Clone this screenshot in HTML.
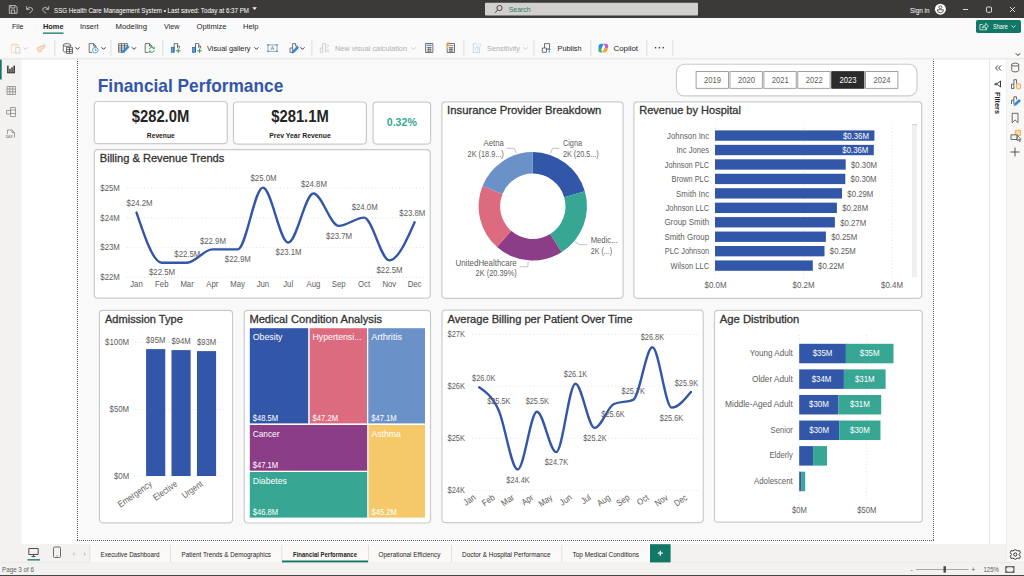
<!DOCTYPE html>
<html><head><meta charset="utf-8"><title>SSG Health Care Management System</title>
<style>
html,body{margin:0;padding:0;background:#ffffff;}
body{width:1024px;height:576px;overflow:hidden;font-family:"Liberation Sans",sans-serif;}
svg{display:block;position:absolute;left:0;top:0;}
text{font-family:"Liberation Sans",sans-serif;}
</style></head><body>
<svg width="1024" height="576" viewBox="0 0 1024 576">
<rect x="0.00" y="0.00" width="1024.00" height="576.00" fill="#ffffff"/>
<rect x="0.00" y="0.00" width="1024.00" height="18.00" fill="#3b3a39"/>
<rect x="485.00" y="2.70" width="213.00" height="12.80" fill="#d2d0ce" rx="1"/>
<text x="508.7" y="12" font-size="7.4" fill="#2c7a6b" textLength="22" lengthAdjust="spacingAndGlyphs">Search</text>
<g stroke="#3b3a39" stroke-width="0.9" fill="none"><circle cx="499.5" cy="8" r="2.6"/><path d="M497.6,10 L495,12.8"/></g>
<text x="54" y="13" font-size="6.9" fill="#ffffff" textLength="195" lengthAdjust="spacingAndGlyphs">SSG Health Care Management System • Last saved: Today at 6:37 PM</text>
<path d="M252.3,7.300 l4.600,0 l-2.300,2.800 z" fill="#ffffff"/>
<g stroke="#d6d6d6" stroke-width="0.8" fill="none" stroke-linejoin="round"><path d="M9.3,5.600 h6.300 l1.500,1.500 v6.200 h-7.800 z M10.900,5.600 v2.400 h4 v-2.400 M11.300,13.300 v-3.300 h3.400 v3.300"/><path d="M26.600,6.200 v3.100 h3.100 M26.900,9 Q29.600,6.200 31.900,8 Q34,10.300 29.200,13.300"/><path d="M48.700,6.200 v3.100 h-3.100 M48.400,9 Q45.700,6.200 43.400,8 Q41.300,10.300 46.100,13.300"/></g>
<text x="910" y="12.7" font-size="6.9" fill="#ffffff" textLength="19.5" lengthAdjust="spacingAndGlyphs">Sign in</text>
<circle cx="940.4" cy="9.2" r="5.500" fill="#ffffff"/><circle cx="940.400" cy="7.200" r="1.500" fill="none" stroke="#3b3a39" stroke-width="0.800"/><path d="M937.300,9.800 h6.200 a3.100,3 0 0 1 -6.200,0 z" fill="none" stroke="#3b3a39" stroke-width="0.800"/>
<g stroke="#ffffff" stroke-width="0.8" fill="none"><path d="M963,9.5 h5"/><rect x="986.4" y="7" width="5.100" height="5.300" rx="0.900"/><path d="M1010,7 l5,5 M1015,7 l-5,5"/></g>
<rect x="0.00" y="18.00" width="1024.00" height="17.00" fill="#fafafa"/>
<text x="12" y="29.3" font-size="7.2" fill="#252423" textLength="11.5" lengthAdjust="spacingAndGlyphs">File</text>
<text x="43" y="29.3" font-size="7.2" fill="#252423" font-weight="bold" textLength="20.5" lengthAdjust="spacingAndGlyphs">Home</text>
<text x="80" y="29.3" font-size="7.2" fill="#252423" textLength="18.5" lengthAdjust="spacingAndGlyphs">Insert</text>
<text x="115.5" y="29.3" font-size="7.2" fill="#252423" textLength="31.5" lengthAdjust="spacingAndGlyphs">Modeling</text>
<text x="164" y="29.3" font-size="7.2" fill="#252423" textLength="15.5" lengthAdjust="spacingAndGlyphs">View</text>
<text x="196.5" y="29.3" font-size="7.2" fill="#252423" textLength="30.0" lengthAdjust="spacingAndGlyphs">Optimize</text>
<text x="243" y="29.3" font-size="7.2" fill="#252423" textLength="15.5" lengthAdjust="spacingAndGlyphs">Help</text>
<rect x="43.00" y="32.50" width="20.50" height="1.30" fill="#117865"/>
<rect x="976.00" y="20.10" width="45.00" height="12.90" fill="#117865" rx="1.8"/>
<text x="993" y="29.3" font-size="7" fill="#ffffff" textLength="15" lengthAdjust="spacingAndGlyphs">Share</text>
<g stroke="#ffffff" stroke-width="0.8" fill="none"><path d="M1011.5,25.5 l2,2 l2,-2"/><path d="M982.6,24.500 h-2.700 v5.300 h6.700 v-1.800 M982.200,28.100 q0.300,-2.900 3.500,-3 v-1.800 l2.800,2.700 l-2.800,2.700 v-1.800 q-2.100,-0.100 -3.500,1.200 z" stroke-width="0.700"/></g>
<rect x="0.00" y="35.00" width="1024.00" height="23.00" fill="#fafafa"/>
<path d="M1015.8,53.3 l2.2,2.2 l2.2,-2.2" stroke="#252423" stroke-width="1" fill="none"/>
<rect x="54.50" y="40.00" width="0.80" height="16.00" fill="#d8d6d4"/>
<rect x="110.50" y="40.00" width="0.80" height="16.00" fill="#d8d6d4"/>
<rect x="162.50" y="40.00" width="0.80" height="16.00" fill="#d8d6d4"/>
<rect x="311.50" y="40.00" width="0.80" height="16.00" fill="#d8d6d4"/>
<rect x="463.50" y="40.00" width="0.80" height="16.00" fill="#d8d6d4"/>
<rect x="533.50" y="40.00" width="0.80" height="16.00" fill="#d8d6d4"/>
<rect x="590.50" y="40.00" width="0.80" height="16.00" fill="#d8d6d4"/>
<rect x="646.50" y="40.00" width="0.80" height="16.00" fill="#d8d6d4"/>
<rect x="672.50" y="40.00" width="0.80" height="16.00" fill="#d8d6d4"/>
<text x="207" y="50.5" font-size="7.5" fill="#252423" textLength="43.5" lengthAdjust="spacingAndGlyphs">Visual gallery</text>
<text x="335" y="50.5" font-size="7.5" fill="#b3b0ad" textLength="72" lengthAdjust="spacingAndGlyphs">New visual calculation</text>
<text x="487" y="50.5" font-size="7.5" fill="#b3b0ad" textLength="33" lengthAdjust="spacingAndGlyphs">Sensitivity</text>
<text x="557.5" y="50.5" font-size="7.5" fill="#252423" textLength="24" lengthAdjust="spacingAndGlyphs">Publish</text>
<text x="613.5" y="50.5" font-size="7.5" fill="#252423" textLength="24.5" lengthAdjust="spacingAndGlyphs">Copilot</text>
<g fill="#252423"><circle cx="655.6" cy="47.8" r="0.8"/><circle cx="659.4" cy="47.8" r="0.8"/><circle cx="663.2" cy="47.8" r="0.8"/></g>
<path d="M23.5,47.3 l2,2 l2,-2" stroke="#c8c6c4" stroke-width="0.9" fill="none"/>
<path d="M75.5,47.3 l2,2 l2,-2" stroke="#252423" stroke-width="0.9" fill="none"/>
<path d="M101.5,47.3 l2,2 l2,-2" stroke="#252423" stroke-width="0.9" fill="none"/>
<path d="M132,47.3 l2,2 l2,-2" stroke="#252423" stroke-width="0.9" fill="none"/>
<path d="M254.5,47.3 l2,2 l2,-2" stroke="#252423" stroke-width="0.9" fill="none"/>
<path d="M300.5,47.3 l2,2 l2,-2" stroke="#252423" stroke-width="0.9" fill="none"/>
<path d="M411.5,47.3 l2,2 l2,-2" stroke="#c8c6c4" stroke-width="0.9" fill="none"/>
<path d="M523.5,47.3 l2,2 l2,-2" stroke="#c8c6c4" stroke-width="0.9" fill="none"/>
<g fill="none" stroke-width="0.75" stroke-linejoin="round"><path d="M13,44.6 h-1.7 v8.2 h4 M16.5,44.6 h1.8 v2.2 M13,43.8 h3.5 v1.6 h-3.5 z" stroke="#f3cfa9"/><path d="M15.7,47.4 h4.2 v5.8 h-4.2 z" stroke="#c8c6c4" fill="#faf9f8"/><path d="M36.8,48.2 l6.2,-2.8 l1.2,2.6 l-3.2,1.500 l0.300,1.800 l-2.200,0.800 z" stroke="#f0b67f" fill="#fbe3c8"/><path d="M43,45.400 l1.600,-1.300 l1,2.100 l-1.400,0.800" stroke="#c8c6c4"/><path d="M63.300,45 a3.700,1.400 0 0 1 7.400,0 a3.700,1.400 0 0 1 -7.400,0 v6 a3.700,1.400 0 0 0 3.200,1.300 M70.700,45 v2" stroke="#484644"/><path d="M66.500,47.400 h6 v6 h-6 z M66.500,49.400 h6 M66.500,51.400 h6 M69.500,47.400 v6" stroke="#484644" fill="#faf9f8"/><path d="M92,52.400 h-2.800 v-8.800 h4.300 l2.500,2.500 v1.500 M93.500,43.600 v2.500 h2.500" stroke="#484644"/><circle cx="95.300" cy="50.200" r="2.800" stroke="#2b88d8" fill="#faf9f8"/><path d="M95.300,48.600 v1.800 h1.400" stroke="#2b88d8"/><path d="M118.600,43.700 h8.800 v4 M118.600,43.700 v8.500 h4 M118.600,45.800 h8.800 M118.600,48 h6 M118.600,50.100 h4.500 M121.500,43.700 v8.500 M124.500,43.700 v5.500" stroke="#484644"/><path d="M122,53 l0.600,-2.200 l5.200,-5.400 l1.600,1.600 l-5.200,5.400 z" fill="#2b88d8" stroke="#2b88d8" stroke-width="0.400"/><path d="M148.500,52.400 h-3.300 v-8.800 h4.300 l2.500,2.500 v1 M149.500,43.600 v2.500 h2.500" stroke="#484644"/><path d="M149.300,49.300 a2.700,2.700 0 0 1 4.800,-0.900 M154.400,50.300 a2.700,2.700 0 0 1 -4.800,0.900" stroke="#2a9d4b" stroke-width="0.9"/><path d="M154.400,46.900 v1.700 h-1.700 M149.300,52.700 v-1.700 h1.700" stroke="#2a9d4b" stroke-width="0.8"/></g>
<g fill="none" stroke-width="0.75"><rect x="171.3" y="47.3" width="2.6" height="5" fill="#5aa3e6" stroke="#1f6fbf"/><path d="M174.20000000000002,52.300 v-8.700 h3.300 v4.500 M177.5,46 h1.800 v2.500" stroke="#484644"/><path d="M176.10000000000002,50.800 h4.400 M178.3,48.600 v4.400" stroke="#2a9d4b" stroke-width="1"/></g>
<g fill="none" stroke-width="0.75"><rect x="192.6" y="47.3" width="2.6" height="5" fill="#5aa3e6" stroke="#1f6fbf"/><path d="M195.5,52.300 v-8.700 h3.300 v4.500 M198.79999999999998,46 h1.800 v2.500" stroke="#484644"/><path d="M197.4,50.800 h4.400 M199.6,48.600 v4.400" stroke="#2a9d4b" stroke-width="1"/></g>
<g fill="none" stroke-width="0.75" stroke-linejoin="round"><rect x="268" y="44.900" width="9" height="6.500" stroke="#8a8886"/><path d="M270.900,50 l1.600,-3.800 l1.600,3.800 M271.500,48.700 h2" stroke="#2b88d8" stroke-width="0.6"/><g fill="#2b88d8" stroke="none"><rect x="267.300" y="44.200" width="1.400" height="1.400"/><rect x="276.300" y="44.200" width="1.400" height="1.400"/><rect x="267.300" y="50.700" width="1.400" height="1.400"/><rect x="276.300" y="50.700" width="1.400" height="1.400"/></g><path d="M290,52.300 v-4.300 h2.600 v4.300 z M292.600,48 v-4.400 h3 v2.500 M295.600,46 h2 v1" stroke="#484644"/><path d="M292,53.300 l0.600,-2.300 l4.600,-4.900 l1.600,1.600 l-4.600,4.900 z" fill="#2b88d8" stroke="#2b88d8" stroke-width="0.400"/><path d="M320.300,52.300 v-4.300 h2.400 v4.300 z M322.700,48 v-4.400 h2.800 v8.700" stroke="#c8c6c4"/><path d="M326,45.200 h2.800 l-1.800,3.300 M326.300,49.300 l2.600,3.200 M328.900,49.300 l-2.600,3.200" stroke="#c8c6c4" stroke-width="0.6"/><rect x="425.600" y="43.500" width="7.300" height="9" stroke="#484644"/><path d="M426.800,45.300 h4.900" stroke="#2b88d8" stroke-width="1.100"/><path d="M426.800,47.500 h4.900 M426.800,49.300 h4.900 M426.800,51.100 h4.900 M428.400,46.800 v5 M430.100,46.800 v5" stroke="#484644" stroke-width="0.6"/><rect x="447.200" y="43.500" width="7.300" height="9" stroke="#484644"/><path d="M448.800,45.600 h4.500 M448.600,47.700 h4.700 M448.600,49.400 h4.700 M448.600,51.100 h4.700 M450.100,47 v4.800 M451.800,47 v4.800" stroke="#484644" stroke-width="0.6"/><path d="M447.200,42.200 h2.300 l-1,2.400 h1.300 l-3.200,4.300 l0.900,-2.900 h-1.300 z" fill="#e8912d" stroke="#faf9f8" stroke-width="0.3"/><path d="M476.500,43.700 h-3.200 v8.700 h6.200 v-4" stroke="#a9d1f2"/><path d="M477.300,45.500 l2,-2 l2,2 l-2.800,2.800 z M475,48.300 l2,-1.300 l1.600,2.200 l-2,1.300 z" stroke="#a9d1f2" stroke-width="0.6"/><path d="M542.300,48 h4.200 v4.300 h-4.200 z M544.500,48 v-4.400 h5 v5.500 h-3" stroke="#484644"/><path d="M549.200,53 v-4.500 M547.600,50 l1.600,-1.600 l1.600,1.600" stroke="#2b88d8" stroke-width="0.8"/></g>
<g><path d="M598.500,47 q0,-3.200 3.200,-3.200 h2 l-1.700,4.800 h-3.500 z" fill="#2f8fe8"/><path d="M603.700,43.800 h1.800 q3,0 2.700,3.200 l-0.200,1.200 h-3.500 l0.500,-1.700 z" fill="#c25fd0"/><path d="M608,48.200 l-0.300,1.300 q-0.700,3 -3.500,3 h-2 l1.700,-4.800 z" fill="#f5a73b"/><path d="M602.200,52.500 h-1.200 q-3,0 -2.600,-3 l0.200,-1.500 h3.600 l-0.800,2.300 z" fill="#3bb273"/><path d="M602.600,46.300 h2.300 l-1.300,3.800 h-2.300 z" fill="#ffffff"/></g>
<rect x="0.00" y="59.00" width="21.50" height="485.00" fill="#f3f2f1"/>
<rect x="0.00" y="59.00" width="1.70" height="20.50" fill="#117865"/>
<g fill="#3b3a39"><rect x="7.1" y="65.600" width="1.500" height="7.600"/><rect x="9.200" y="68.800" width="1.500" height="4.400"/><rect x="11.300" y="67.300" width="1.500" height="5.900"/><rect x="13.400" y="65.600" width="1.600" height="7.600"/><rect x="7.100" y="72.300" width="7.900" height="0.900"/></g>
<g fill="none" stroke="#8a8886" stroke-width="0.800"><path d="M7,86.500 h8.500 v8 h-8.500 z M7,89 h8.500 M7,91.800 h8.500 M9.800,86.500 v8 M12.700,86.500 v8"/><path d="M10.500,107.500 h5 v9 h-5 z M10.500,110 h5 M10.500,113.500 h5 M6.500,110.500 h4 v3.500 h-4 z"/><path d="M7.500,134 v-4 h4.500 l2.500,2.500 v5 M12,130 v2.500 h2.500"/></g>
<text x="5.8" y="137.8" font-size="3.2" fill="#8a8886" font-weight="bold">DAX</text>
<rect x="989.00" y="59.00" width="0.80" height="485.00" fill="#e1dfdd"/>
<rect x="1006.50" y="59.00" width="17.50" height="485.00" fill="#f8f7f6"/>
<rect x="1006.20" y="59.00" width="0.60" height="485.00" fill="#eceae8"/>
<g fill="none" stroke="#252423" stroke-width="0.900"><path d="M998,65.500 l-2.500,2.500 l2.500,2.500 M1001,65.500 l-2.500,2.500 l2.500,2.500"/><path d="M995,81.500 h6 l-2.300,2.800 v3 l-1.400,-1 v-2 z" transform="rotate(90 998 84)"/></g>
<text x="0" y="0" font-size="7.400" font-weight="bold" fill="#252423" transform="translate(995.300,92) rotate(90)" textLength="22" lengthAdjust="spacingAndGlyphs">Filters</text>
<g fill="none" stroke="#484644" stroke-width="0.8" stroke-linejoin="round"><path d="M1011.7,64.6 a3.5,1.5 0 0 1 7,0 v5.800 a3.500,1.500 0 0 1 -7,0 z M1011.700,64.600 a3.500,1.500 0 0 0 7,0"/><path d="M1011.500,88.500 v-4.300 h2.400 v4.300 z M1013.900,84.200 v-4.500 h2.600 v4"/><rect x="1016.600" y="83.800" width="4" height="5" rx="1.100" stroke="#e8912d" fill="#fde7cc"/><path d="M1011.500,104 v-3.800 h2.400 v3.800 M1013.900,100.200 v-3.400 h2.600 v2.800"/><path d="M1013.800,105.800 l0.800,-2.400 l4.400,-4.200 l1.700,1.700 l-4.400,4.200 z" fill="#2b88d8" stroke="#2b88d8" stroke-width="0.400"/><path d="M1012.200,113.300 h5.800 v9.400 l-2.900,-2.700 l-2.900,2.700 z"/><rect x="1015.300" y="130.300" width="5.200" height="5.200" fill="#fbd9a8" stroke="#f0a23c"/><path d="M1011,134.800 h6 v4.700 h-6 z" fill="#f3f2f1"/><path d="M1017.300,135.500 v5.300 l1.300,-1.200 l1,2 l0.800,-0.400 l-1,-1.900 h1.700 z" fill="#ffffff" stroke="#252423" stroke-width="0.600"/><path d="M1010.500,152 h9 M1015,147.500 v9" stroke-width="0.9"/></g>
<rect x="0.00" y="544.00" width="1024.00" height="32.00" fill="#f3f2f1"/>
<rect x="0.00" y="575.00" width="1024.00" height="1.00" fill="#484644"/>
<rect x="1006.50" y="544.00" width="17.50" height="18.50" fill="#f8f7f6"/>
<rect x="1006.20" y="544.00" width="0.60" height="18.50" fill="#eceae8"/>
<rect x="0.00" y="562.40" width="1024.00" height="0.70" fill="#e9e7e5"/>
<rect x="89.80" y="544.20" width="560.20" height="18.30" fill="#faf9f8"/>
<text x="100.5" y="556.6" font-size="7.4" fill="#252423" textLength="59.0" lengthAdjust="spacingAndGlyphs">Executive Dashboard</text>
<text x="181.5" y="556.6" font-size="7.4" fill="#252423" textLength="89.5" lengthAdjust="spacingAndGlyphs">Patient Trends &amp; Demographics</text>
<text x="293" y="556.6" font-size="7.4" fill="#252423" font-weight="bold" textLength="64" lengthAdjust="spacingAndGlyphs">Financial Performance</text>
<text x="378.5" y="556.6" font-size="7.4" fill="#252423" textLength="62.0" lengthAdjust="spacingAndGlyphs">Operational Efficiency</text>
<text x="462" y="556.6" font-size="7.4" fill="#252423" textLength="88.5" lengthAdjust="spacingAndGlyphs">Doctor &amp; Hospital Performance</text>
<text x="572.5" y="556.6" font-size="7.4" fill="#252423" textLength="66.5" lengthAdjust="spacingAndGlyphs">Top Medical Conditions</text>
<rect x="89.50" y="545.00" width="0.70" height="17.00" fill="#d8d6d4"/>
<rect x="170.30" y="545.00" width="0.70" height="17.00" fill="#d8d6d4"/>
<rect x="281.50" y="545.00" width="0.70" height="17.00" fill="#d8d6d4"/>
<rect x="368.00" y="545.00" width="0.70" height="17.00" fill="#d8d6d4"/>
<rect x="451.00" y="545.00" width="0.70" height="17.00" fill="#d8d6d4"/>
<rect x="561.50" y="545.00" width="0.70" height="17.00" fill="#d8d6d4"/>
<rect x="282.00" y="560.50" width="86.00" height="1.90" fill="#117865"/>
<rect x="650.00" y="544.20" width="20.60" height="18.20" fill="#117865"/>
<path d="M657.8,553.2 h5 M660.3,550.7 v5" stroke="#ffffff" stroke-width="1.300"/>
<g fill="none" stroke="#3b3a39" stroke-width="0.900"><path d="M28.800,548.500 h9.400 v6 h-9.400 z M31.500,556.500 h4 M33.500,554.500 v2"/></g>
<rect x="27.50" y="559.20" width="12.50" height="1.30" fill="#117865"/>
<g fill="none" stroke="#605e5c" stroke-width="0.900"><rect x="53.500" y="547" width="7" height="10.500" rx="1.200"/><path d="M56.500,555.800 h1"/></g>
<path d="M74.500,552 l-2,2 l2,2 z M84,552 l2,2 l-2,2 z" fill="#c8c6c4"/>
<text x="2" y="572" font-size="7" fill="#605e5c" textLength="32" lengthAdjust="spacingAndGlyphs">Page 3 of 6</text>
<text x="910.5" y="572" font-size="7" fill="#605e5c">-</text>
<rect x="916.00" y="569.20" width="52.50" height="0.70" fill="#8a8886"/>
<rect x="943.50" y="566.20" width="2.40" height="6.40" fill="#484644"/>
<text x="971.3" y="572.3" font-size="7" fill="#605e5c">+</text>
<text x="983.5" y="572" font-size="7" fill="#605e5c" textLength="15.5" lengthAdjust="spacingAndGlyphs">125%</text>
<rect x="1005.2" y="566.1" width="9.300" height="6.800" fill="#605e5c"/><rect x="1006.300" y="567.200" width="7.100" height="4.600" rx="1.800" fill="#f3f2f1"/>
<g fill="none" stroke="#252423" stroke-width="0.900"><circle cx="1015.300" cy="554.500" r="1.600"/><path d="M1015.300,549.700 l2.400,1.200 l1.800,-0.300 l0.900,2 l-1.300,1.900 l1.300,1.900 l-0.900,2 l-1.800,-0.300 l-2.400,1.200 l-2.400,-1.200 l-1.800,0.300 l-0.900,-2 l1.300,-1.900 l-1.300,-1.900 l0.900,-2 l1.800,0.300 z" stroke-linejoin="round"/></g>
<rect x="78.30" y="59.00" width="854.70" height="481.00" fill="#f9f9f9"/>
<g stroke="#5f5f5f" stroke-width="1" stroke-dasharray="1,1" fill="none"><path d="M77.5,59 V541"/><path d="M933.5,59 V541"/><path d="M77,540.5 H934"/></g>
<text x="97.8" y="92.3" font-size="17.8" fill="#3257A8" font-weight="bold" textLength="185.5" lengthAdjust="spacingAndGlyphs">Financial Performance</text>
<rect x="676.4" y="64.2" width="240.6" height="31.7" rx="8" fill="#ffffff" stroke="#cbcbcb" stroke-width="1.1"/>
<rect x="696.10" y="71.6" width="32.3" height="16.7" fill="#ffffff" stroke="#8a8a8a" stroke-width="0.8"/>
<text x="712.5" y="82.8" font-size="9" fill="#605e5c" text-anchor="middle" textLength="17" lengthAdjust="spacingAndGlyphs">2019</text>
<rect x="730.00" y="71.6" width="32.3" height="16.7" fill="#ffffff" stroke="#8a8a8a" stroke-width="0.8"/>
<text x="746.4" y="82.8" font-size="9" fill="#605e5c" text-anchor="middle" textLength="17" lengthAdjust="spacingAndGlyphs">2020</text>
<rect x="763.90" y="71.6" width="32.3" height="16.7" fill="#ffffff" stroke="#8a8a8a" stroke-width="0.8"/>
<text x="780.3" y="82.8" font-size="9" fill="#605e5c" text-anchor="middle" textLength="17" lengthAdjust="spacingAndGlyphs">2021</text>
<rect x="797.80" y="71.6" width="32.3" height="16.7" fill="#ffffff" stroke="#8a8a8a" stroke-width="0.8"/>
<text x="814.2" y="82.8" font-size="9" fill="#605e5c" text-anchor="middle" textLength="17" lengthAdjust="spacingAndGlyphs">2022</text>
<rect x="831.70" y="71.6" width="32.3" height="16.7" fill="#2b2b2b" stroke="#2b2b2b" stroke-width="0.8"/>
<text x="848.1" y="82.8" font-size="9" fill="#ffffff" text-anchor="middle" textLength="17" lengthAdjust="spacingAndGlyphs">2023</text>
<rect x="865.60" y="71.6" width="32.3" height="16.7" fill="#ffffff" stroke="#8a8a8a" stroke-width="0.8"/>
<text x="882.0" y="82.8" font-size="9" fill="#605e5c" text-anchor="middle" textLength="17" lengthAdjust="spacingAndGlyphs">2024</text>
<rect x="94.3" y="101.5" width="133.0" height="42.19999999999999" rx="3.5" fill="#ffffff" stroke="#cbcbcb" stroke-width="1.2"/>
<rect x="233.5" y="102" width="132.89999999999998" height="42.099999999999994" rx="3.5" fill="#ffffff" stroke="#cbcbcb" stroke-width="1.2"/>
<rect x="373.1" y="102.2" width="57.5" height="41.89999999999999" rx="3.5" fill="#ffffff" stroke="#cbcbcb" stroke-width="1.2"/>
<text x="160.5" y="121.7" font-size="16.3" fill="#252423" text-anchor="middle" font-weight="bold" textLength="57.5" lengthAdjust="spacingAndGlyphs">$282.0M</text>
<text x="160.8" y="137.8" font-size="7.6" fill="#252423" text-anchor="middle" font-weight="bold" textLength="28" lengthAdjust="spacingAndGlyphs">Revenue</text>
<text x="300" y="122.1" font-size="16.3" fill="#252423" text-anchor="middle" font-weight="bold" textLength="57.5" lengthAdjust="spacingAndGlyphs">$281.1M</text>
<text x="300" y="138" font-size="7.6" fill="#252423" text-anchor="middle" font-weight="bold" textLength="61.5" lengthAdjust="spacingAndGlyphs">Prev Year Revenue</text>
<text x="401.8" y="126" font-size="10.7" fill="#37A794" text-anchor="middle" font-weight="bold" textLength="30" lengthAdjust="spacingAndGlyphs">0.32%</text>
<rect x="94.3" y="149.6" width="335.9" height="148.6" rx="3.5" fill="#ffffff" stroke="#cbcbcb" stroke-width="1.2"/>
<text x="99.8" y="162.3" font-size="10.1" fill="#333333" stroke="#333333" stroke-width="0.28" textLength="124.5" lengthAdjust="spacingAndGlyphs">Billing &amp; Revenue Trends</text>
<text x="100.3" y="280.0" font-size="9" fill="#605e5c" textLength="19.5" lengthAdjust="spacingAndGlyphs">$22M</text>
<path d="M127,277.30 H426" stroke="#dcdcdc" stroke-width="0.8" stroke-dasharray="1,2.4"/>
<text x="100.3" y="250.3" font-size="9" fill="#605e5c" textLength="19.5" lengthAdjust="spacingAndGlyphs">$23M</text>
<path d="M127,247.60 H426" stroke="#dcdcdc" stroke-width="0.8" stroke-dasharray="1,2.4"/>
<text x="100.3" y="220.6" font-size="9" fill="#605e5c" textLength="19.5" lengthAdjust="spacingAndGlyphs">$24M</text>
<path d="M127,217.90 H426" stroke="#dcdcdc" stroke-width="0.8" stroke-dasharray="1,2.4"/>
<text x="100.3" y="190.9" font-size="9" fill="#605e5c" textLength="19.5" lengthAdjust="spacingAndGlyphs">$25M</text>
<path d="M127,188.20 H426" stroke="#dcdcdc" stroke-width="0.8" stroke-dasharray="1,2.4"/>
<path d="M136.50,212.55 C144.93,237.65 153.35,262.75 161.78,262.75 C170.21,262.75 178.63,262.75 187.06,262.75 C195.49,262.75 203.91,249.38 212.34,249.38 C220.77,249.38 229.19,249.38 237.62,249.38 C246.05,249.38 254.47,187.61 262.90,187.61 C271.33,187.61 279.75,242.55 288.18,242.55 C296.61,242.55 305.03,193.55 313.46,193.55 C321.89,193.55 330.31,225.92 338.74,225.92 C347.17,225.92 355.59,217.60 364.02,217.60 C372.45,217.60 380.87,260.37 389.30,260.37 C397.73,260.37 406.15,241.36 414.58,222.35" fill="none" stroke="#3257A8" stroke-width="2.4" stroke-linecap="round"/>
<text x="136.5" y="287" font-size="9" fill="#605e5c" text-anchor="middle" textLength="12.51" lengthAdjust="spacingAndGlyphs">Jan</text>
<text x="161.78" y="287" font-size="9" fill="#605e5c" text-anchor="middle" textLength="13.37" lengthAdjust="spacingAndGlyphs">Feb</text>
<text x="187.06" y="287" font-size="9" fill="#605e5c" text-anchor="middle" textLength="13.36" lengthAdjust="spacingAndGlyphs">Mar</text>
<text x="212.34" y="287" font-size="9" fill="#605e5c" text-anchor="middle" textLength="12.08" lengthAdjust="spacingAndGlyphs">Apr</text>
<text x="237.62" y="287" font-size="9" fill="#605e5c" text-anchor="middle" textLength="14.66" lengthAdjust="spacingAndGlyphs">May</text>
<text x="262.9" y="287" font-size="9" fill="#605e5c" text-anchor="middle" textLength="12.51" lengthAdjust="spacingAndGlyphs">Jun</text>
<text x="288.18" y="287" font-size="9" fill="#605e5c" text-anchor="middle" textLength="9.92" lengthAdjust="spacingAndGlyphs">Jul</text>
<text x="313.46" y="287" font-size="9" fill="#605e5c" text-anchor="middle" textLength="13.81" lengthAdjust="spacingAndGlyphs">Aug</text>
<text x="338.74" y="287" font-size="9" fill="#605e5c" text-anchor="middle" textLength="13.81" lengthAdjust="spacingAndGlyphs">Sep</text>
<text x="364.02" y="287" font-size="9" fill="#605e5c" text-anchor="middle" textLength="12.07" lengthAdjust="spacingAndGlyphs">Oct</text>
<text x="389.3" y="287" font-size="9" fill="#605e5c" text-anchor="middle" textLength="13.8" lengthAdjust="spacingAndGlyphs">Nov</text>
<text x="414.58" y="287" font-size="9" fill="#605e5c" text-anchor="middle" textLength="13.8" lengthAdjust="spacingAndGlyphs">Dec</text>
<text x="139.6" y="206.1" font-size="9" fill="#605e5c" text-anchor="middle" textLength="26" lengthAdjust="spacingAndGlyphs">$24.2M</text>
<text x="162" y="274.5" font-size="9" fill="#605e5c" text-anchor="middle" textLength="26" lengthAdjust="spacingAndGlyphs">$22.5M</text>
<text x="187.3" y="257.3" font-size="9" fill="#605e5c" text-anchor="middle" textLength="26" lengthAdjust="spacingAndGlyphs">$22.5M</text>
<text x="212.9" y="243.5" font-size="9" fill="#605e5c" text-anchor="middle" textLength="26" lengthAdjust="spacingAndGlyphs">$22.9M</text>
<text x="237.8" y="262" font-size="9" fill="#605e5c" text-anchor="middle" textLength="26" lengthAdjust="spacingAndGlyphs">$22.9M</text>
<text x="263.5" y="180.5" font-size="9" fill="#605e5c" text-anchor="middle" textLength="26" lengthAdjust="spacingAndGlyphs">$25.0M</text>
<text x="288.6" y="255.2" font-size="9" fill="#605e5c" text-anchor="middle" textLength="26" lengthAdjust="spacingAndGlyphs">$23.1M</text>
<text x="313.9" y="186.9" font-size="9" fill="#605e5c" text-anchor="middle" textLength="26" lengthAdjust="spacingAndGlyphs">$24.8M</text>
<text x="339.1" y="239.3" font-size="9" fill="#605e5c" text-anchor="middle" textLength="26" lengthAdjust="spacingAndGlyphs">$23.7M</text>
<text x="364.7" y="210.4" font-size="9" fill="#605e5c" text-anchor="middle" textLength="26" lengthAdjust="spacingAndGlyphs">$24.0M</text>
<text x="389.5" y="273" font-size="9" fill="#605e5c" text-anchor="middle" textLength="26" lengthAdjust="spacingAndGlyphs">$22.5M</text>
<text x="412.3" y="216.3" font-size="9" fill="#605e5c" text-anchor="middle" textLength="26" lengthAdjust="spacingAndGlyphs">$23.8M</text>
<rect x="441.9" y="101.9" width="181.20000000000005" height="196.4" rx="3.5" fill="#ffffff" stroke="#cbcbcb" stroke-width="1.2"/>
<text x="447.1" y="114.2" font-size="10.1" fill="#333333" stroke="#333333" stroke-width="0.28" textLength="154.3" lengthAdjust="spacingAndGlyphs">Insurance Provider Breakdown</text>
<path d="M532.80,152.10 A54.2,54.2 0 0 1 584.85,191.18 L564.20,197.18 A32.7,32.7 0 0 0 532.80,173.60 Z" fill="#3257A8"/>
<path d="M584.85,191.18 A54.2,54.2 0 0 1 561.55,252.24 L550.15,234.02 A32.7,32.7 0 0 0 564.20,197.18 Z" fill="#37A794"/>
<path d="M561.55,252.24 A54.2,54.2 0 0 1 496.98,246.98 L511.19,230.84 A32.7,32.7 0 0 0 550.15,234.02 Z" fill="#8B3D88"/>
<path d="M496.98,246.98 A54.2,54.2 0 0 1 482.53,186.03 L502.47,194.07 A32.7,32.7 0 0 0 511.19,230.84 Z" fill="#DD6B7F"/>
<path d="M482.53,186.03 A54.2,54.2 0 0 1 532.80,152.10 L532.80,173.60 A32.7,32.7 0 0 0 502.47,194.07 Z" fill="#6B91C9"/>
<text x="563" y="145.8" font-size="9" fill="#605e5c" textLength="19" lengthAdjust="spacingAndGlyphs">Cigna</text>
<text x="563" y="156.5" font-size="9" fill="#605e5c" textLength="35.7" lengthAdjust="spacingAndGlyphs">2K (20.5...)</text>
<text x="503.8" y="145.8" font-size="9" fill="#605e5c" text-anchor="end" textLength="20.3" lengthAdjust="spacingAndGlyphs">Aetna</text>
<text x="503.8" y="156.5" font-size="9" fill="#605e5c" text-anchor="end" textLength="36.2" lengthAdjust="spacingAndGlyphs">2K (18.9...)</text>
<text x="590.7" y="243.2" font-size="9" fill="#605e5c" textLength="26.9" lengthAdjust="spacingAndGlyphs">Medic...</text>
<text x="590.7" y="253.7" font-size="9" fill="#605e5c" textLength="21.5" lengthAdjust="spacingAndGlyphs">2K (...)</text>
<text x="516.7" y="265.8" font-size="9" fill="#605e5c" text-anchor="end" textLength="61.2" lengthAdjust="spacingAndGlyphs">UnitedHealthcare</text>
<text x="516.7" y="276.2" font-size="9" fill="#605e5c" text-anchor="end" textLength="41.1" lengthAdjust="spacingAndGlyphs">2K (20.39%)</text>
<g fill="none" stroke="#a6a6a6" stroke-width="0.7"><path d="M506.7,148.3 H514.1 L516.5,153.2"/><path d="M559.4,148.3 H552.6 L550.3,153.2"/><path d="M587.4,244.7 H579.6 L575,241.8"/><path d="M519.6,266.8 H527.8 L528.2,261.9"/></g>
<rect x="633.9" y="101.9" width="287.80000000000007" height="196.4" rx="3.5" fill="#ffffff" stroke="#cbcbcb" stroke-width="1.2"/>
<text x="639.2" y="114.2" font-size="10.1" fill="#333333" stroke="#333333" stroke-width="0.28" textLength="101.7" lengthAdjust="spacingAndGlyphs">Revenue by Hospital</text>
<path d="M715.40,124.5 V279.5" stroke="#dcdcdc" stroke-width="0.8" stroke-dasharray="1,2.4"/>
<path d="M803.50,124.5 V279.5" stroke="#dcdcdc" stroke-width="0.8" stroke-dasharray="1,2.4"/>
<path d="M892.00,124.5 V279.5" stroke="#dcdcdc" stroke-width="0.8" stroke-dasharray="1,2.4"/>
<rect x="715.00" y="130.40" width="159.40" height="10.35" fill="#3257A8"/>
<text x="709.1" y="138.7" font-size="9" fill="#605e5c" text-anchor="end" textLength="42" lengthAdjust="spacingAndGlyphs">Johnson Inc</text>
<text x="868.9" y="138.8" font-size="9" fill="#ffffff" text-anchor="end" textLength="26" lengthAdjust="spacingAndGlyphs">$0.36M</text>
<rect x="715.00" y="144.85" width="158.80" height="10.35" fill="#3257A8"/>
<text x="709.1" y="153.15" font-size="9" fill="#605e5c" text-anchor="end" textLength="32.6" lengthAdjust="spacingAndGlyphs">Inc Jones</text>
<text x="868.3" y="153.25" font-size="9" fill="#ffffff" text-anchor="end" textLength="26" lengthAdjust="spacingAndGlyphs">$0.36M</text>
<rect x="715.00" y="159.30" width="130.70" height="10.35" fill="#3257A8"/>
<text x="709.1" y="167.6" font-size="9" fill="#605e5c" text-anchor="end" textLength="44.3" lengthAdjust="spacingAndGlyphs">Johnson PLC</text>
<text x="851.0" y="167.7" font-size="9" fill="#605e5c" textLength="26" lengthAdjust="spacingAndGlyphs">$0.30M</text>
<rect x="715.00" y="173.75" width="130.30" height="10.35" fill="#3257A8"/>
<text x="709.1" y="182.05" font-size="9" fill="#605e5c" text-anchor="end" textLength="37.5" lengthAdjust="spacingAndGlyphs">Brown PLC</text>
<text x="850.6" y="182.15" font-size="9" fill="#605e5c" textLength="26" lengthAdjust="spacingAndGlyphs">$0.30M</text>
<rect x="715.00" y="188.20" width="127.00" height="10.35" fill="#3257A8"/>
<text x="709.1" y="196.5" font-size="9" fill="#605e5c" text-anchor="end" textLength="33" lengthAdjust="spacingAndGlyphs">Smith Inc</text>
<text x="847.3" y="196.6" font-size="9" fill="#605e5c" textLength="26" lengthAdjust="spacingAndGlyphs">$0.29M</text>
<rect x="715.00" y="202.65" width="121.90" height="10.35" fill="#3257A8"/>
<text x="709.1" y="210.95" font-size="9" fill="#605e5c" text-anchor="end" textLength="43.4" lengthAdjust="spacingAndGlyphs">Johnson LLC</text>
<text x="842.2" y="211.05" font-size="9" fill="#605e5c" textLength="26" lengthAdjust="spacingAndGlyphs">$0.28M</text>
<rect x="715.00" y="217.10" width="119.90" height="10.35" fill="#3257A8"/>
<text x="709.1" y="225.4" font-size="9" fill="#605e5c" text-anchor="end" textLength="44.7" lengthAdjust="spacingAndGlyphs">Group Smith</text>
<text x="840.2" y="225.5" font-size="9" fill="#605e5c" textLength="26" lengthAdjust="spacingAndGlyphs">$0.27M</text>
<rect x="715.00" y="231.55" width="110.90" height="10.35" fill="#3257A8"/>
<text x="709.1" y="239.85" font-size="9" fill="#605e5c" text-anchor="end" textLength="44.7" lengthAdjust="spacingAndGlyphs">Smith Group</text>
<text x="831.2" y="239.95" font-size="9" fill="#605e5c" textLength="26" lengthAdjust="spacingAndGlyphs">$0.25M</text>
<rect x="715.00" y="246.00" width="109.50" height="10.35" fill="#3257A8"/>
<text x="709.1" y="254.3" font-size="9" fill="#605e5c" text-anchor="end" textLength="44.3" lengthAdjust="spacingAndGlyphs">PLC Johnson</text>
<text x="829.8" y="254.4" font-size="9" fill="#605e5c" textLength="26" lengthAdjust="spacingAndGlyphs">$0.25M</text>
<rect x="715.00" y="260.45" width="97.80" height="10.35" fill="#3257A8"/>
<text x="709.1" y="268.75" font-size="9" fill="#605e5c" text-anchor="end" textLength="38.5" lengthAdjust="spacingAndGlyphs">Wilson LLC</text>
<text x="818.1" y="268.85" font-size="9" fill="#605e5c" textLength="26" lengthAdjust="spacingAndGlyphs">$0.22M</text>
<text x="715.5" y="287.8" font-size="9" fill="#605e5c" text-anchor="middle" textLength="22" lengthAdjust="spacingAndGlyphs">$0.0M</text>
<text x="803.6" y="287.8" font-size="9" fill="#605e5c" text-anchor="middle" textLength="22" lengthAdjust="spacingAndGlyphs">$0.2M</text>
<text x="892" y="287.8" font-size="9" fill="#605e5c" text-anchor="middle" textLength="22" lengthAdjust="spacingAndGlyphs">$0.4M</text>
<rect x="911.90" y="124.30" width="5.20" height="153.00" fill="#f0f0f0"/>
<rect x="911.90" y="124.30" width="5.20" height="0.80" fill="#c8c8c8"/>
<rect x="99.4" y="310.4" width="133.2" height="212.39999999999998" rx="3.5" fill="#ffffff" stroke="#cbcbcb" stroke-width="1.2"/>
<text x="105" y="322.9" font-size="10.1" fill="#333333" stroke="#333333" stroke-width="0.28" textLength="77.8" lengthAdjust="spacingAndGlyphs">Admission Type</text>
<text x="129.1" y="345.2" font-size="9" fill="#605e5c" text-anchor="end" textLength="24" lengthAdjust="spacingAndGlyphs">$100M</text>
<path d="M135,342.40 H227" stroke="#dcdcdc" stroke-width="0.8" stroke-dasharray="1,2.4"/>
<text x="129.1" y="412.3" font-size="9" fill="#605e5c" text-anchor="end" textLength="19.5" lengthAdjust="spacingAndGlyphs">$50M</text>
<path d="M135,409.50 H227" stroke="#dcdcdc" stroke-width="0.8" stroke-dasharray="1,2.4"/>
<text x="129.1" y="478.8" font-size="9" fill="#605e5c" text-anchor="end" textLength="15.1" lengthAdjust="spacingAndGlyphs">$0M</text>
<path d="M135,476.00 H227" stroke="#dcdcdc" stroke-width="0.8" stroke-dasharray="1,2.4"/>
<rect x="146.10" y="349.10" width="19.15" height="126.90" fill="#3257A8"/>
<text x="155.7" y="343.1" font-size="9" fill="#605e5c" text-anchor="middle" textLength="19.3" lengthAdjust="spacingAndGlyphs">$95M</text>
<text font-size="9" fill="#605e5c" text-anchor="end" textLength="39.25" lengthAdjust="spacingAndGlyphs" transform="translate(152.60,485.30) rotate(-35)">Emergency</text>
<rect x="171.50" y="350.10" width="19.15" height="125.90" fill="#3257A8"/>
<text x="181.1" y="343.7" font-size="9" fill="#605e5c" text-anchor="middle" textLength="19.3" lengthAdjust="spacingAndGlyphs">$94M</text>
<text font-size="9" fill="#605e5c" text-anchor="end" textLength="27.17" lengthAdjust="spacingAndGlyphs" transform="translate(178.00,485.30) rotate(-35)">Elective</text>
<rect x="196.95" y="351.10" width="19.15" height="124.90" fill="#3257A8"/>
<text x="206.55" y="345" font-size="9" fill="#605e5c" text-anchor="middle" textLength="19.3" lengthAdjust="spacingAndGlyphs">$93M</text>
<text font-size="9" fill="#605e5c" text-anchor="end" textLength="23.29" lengthAdjust="spacingAndGlyphs" transform="translate(203.45,485.30) rotate(-35)">Urgent</text>
<rect x="244.3" y="310.4" width="186.2" height="212.60000000000002" rx="3.5" fill="#ffffff" stroke="#cbcbcb" stroke-width="1.2"/>
<text x="249.4" y="322.9" font-size="10.1" fill="#333333" stroke="#333333" stroke-width="0.28" textLength="132.6" lengthAdjust="spacingAndGlyphs">Medical Condition Analysis</text>
<rect x="249.80" y="328.20" width="58.40" height="95.20" fill="#3257A8"/>
<text x="252.7" y="340.4" font-size="9.8" fill="#ffffff" textLength="29.8" lengthAdjust="spacingAndGlyphs">Obesity</text>
<text x="252.7" y="420.8" font-size="9" fill="#ffffff" textLength="25.5" lengthAdjust="spacingAndGlyphs">$48.5M</text>
<rect x="309.70" y="328.20" width="57.30" height="95.20" fill="#DD6B7F"/>
<text x="312.6" y="340.4" font-size="9.8" fill="#ffffff" textLength="48.8" lengthAdjust="spacingAndGlyphs">Hypertensi...</text>
<text x="312.6" y="420.8" font-size="9" fill="#ffffff" textLength="25.5" lengthAdjust="spacingAndGlyphs">$47.2M</text>
<rect x="368.30" y="328.20" width="56.70" height="95.20" fill="#6B91C9"/>
<text x="371.2" y="340.4" font-size="9.8" fill="#ffffff" textLength="30.8" lengthAdjust="spacingAndGlyphs">Arthritis</text>
<text x="371.2" y="420.8" font-size="9" fill="#ffffff" textLength="25.5" lengthAdjust="spacingAndGlyphs">$47.1M</text>
<rect x="249.80" y="425.00" width="117.40" height="45.70" fill="#8B3D88"/>
<text x="252.7" y="437.2" font-size="9.8" fill="#ffffff" textLength="26.8" lengthAdjust="spacingAndGlyphs">Cancer</text>
<text x="252.7" y="468.1" font-size="9" fill="#ffffff" textLength="25.5" lengthAdjust="spacingAndGlyphs">$47.1M</text>
<rect x="249.80" y="472.00" width="117.40" height="45.60" fill="#37A794"/>
<text x="252.7" y="484.2" font-size="9.8" fill="#ffffff" textLength="34.2" lengthAdjust="spacingAndGlyphs">Diabetes</text>
<text x="252.7" y="515.0" font-size="9" fill="#ffffff" textLength="25.5" lengthAdjust="spacingAndGlyphs">$46.8M</text>
<rect x="368.50" y="425.00" width="56.50" height="92.60" fill="#F5C869"/>
<text x="371.4" y="437.2" font-size="9.8" fill="#ffffff" textLength="29.3" lengthAdjust="spacingAndGlyphs">Asthma</text>
<text x="371.4" y="515.0" font-size="9" fill="#ffffff" textLength="25.5" lengthAdjust="spacingAndGlyphs">$45.2M</text>
<rect x="442" y="310.2" width="261.20000000000005" height="212.40000000000003" rx="3.5" fill="#ffffff" stroke="#cbcbcb" stroke-width="1.2"/>
<text x="447.5" y="322.7" font-size="10.1" fill="#333333" stroke="#333333" stroke-width="0.28" textLength="184.8" lengthAdjust="spacingAndGlyphs">Average Billing per Patient Over Time</text>
<text x="447.5" y="493.1" font-size="9" fill="#605e5c" textLength="17.5" lengthAdjust="spacingAndGlyphs">$24K</text>
<path d="M472,490.30 H698" stroke="#dcdcdc" stroke-width="0.8" stroke-dasharray="1,2.4"/>
<text x="447.5" y="441.1" font-size="9" fill="#605e5c" textLength="17.5" lengthAdjust="spacingAndGlyphs">$25K</text>
<path d="M472,438.30 H698" stroke="#dcdcdc" stroke-width="0.8" stroke-dasharray="1,2.4"/>
<text x="447.5" y="389.1" font-size="9" fill="#605e5c" textLength="17.5" lengthAdjust="spacingAndGlyphs">$26K</text>
<path d="M472,386.30 H698" stroke="#dcdcdc" stroke-width="0.8" stroke-dasharray="1,2.4"/>
<text x="447.5" y="337.1" font-size="9" fill="#605e5c" textLength="17.5" lengthAdjust="spacingAndGlyphs">$27K</text>
<path d="M472,334.30 H698" stroke="#dcdcdc" stroke-width="0.8" stroke-dasharray="1,2.4"/>
<path d="M479.20,387.34 C485.62,391.67 492.03,396.01 498.44,409.70 C504.86,423.39 511.27,469.50 517.69,469.50 C524.10,469.50 530.52,411.78 536.93,411.78 C543.35,411.78 549.76,452.08 556.18,452.08 C562.59,452.08 569.01,383.70 575.42,383.70 C581.84,383.70 588.25,427.90 594.67,427.90 C601.08,427.90 607.50,406.75 613.91,403.98 C620.33,401.21 626.75,402.59 633.16,399.82 C639.57,397.05 645.99,347.30 652.40,347.30 C658.82,347.30 665.24,407.62 671.65,407.62 C678.06,407.62 684.48,399.82 690.89,392.02" fill="none" stroke="#3257A8" stroke-width="2.4" stroke-linecap="round"/>
<text font-size="9" fill="#605e5c" text-anchor="end" textLength="12.51" lengthAdjust="spacingAndGlyphs" transform="translate(476.30,498.90) rotate(-35)">Jan</text>
<text font-size="9" fill="#605e5c" text-anchor="end" textLength="13.37" lengthAdjust="spacingAndGlyphs" transform="translate(495.55,498.90) rotate(-35)">Feb</text>
<text font-size="9" fill="#605e5c" text-anchor="end" textLength="13.36" lengthAdjust="spacingAndGlyphs" transform="translate(514.79,498.90) rotate(-35)">Mar</text>
<text font-size="9" fill="#605e5c" text-anchor="end" textLength="12.08" lengthAdjust="spacingAndGlyphs" transform="translate(534.03,498.90) rotate(-35)">Apr</text>
<text font-size="9" fill="#605e5c" text-anchor="end" textLength="14.66" lengthAdjust="spacingAndGlyphs" transform="translate(553.28,498.90) rotate(-35)">May</text>
<text font-size="9" fill="#605e5c" text-anchor="end" textLength="12.51" lengthAdjust="spacingAndGlyphs" transform="translate(572.52,498.90) rotate(-35)">Jun</text>
<text font-size="9" fill="#605e5c" text-anchor="end" textLength="9.92" lengthAdjust="spacingAndGlyphs" transform="translate(591.77,498.90) rotate(-35)">Jul</text>
<text font-size="9" fill="#605e5c" text-anchor="end" textLength="13.81" lengthAdjust="spacingAndGlyphs" transform="translate(611.01,498.90) rotate(-35)">Aug</text>
<text font-size="9" fill="#605e5c" text-anchor="end" textLength="13.81" lengthAdjust="spacingAndGlyphs" transform="translate(630.26,498.90) rotate(-35)">Sep</text>
<text font-size="9" fill="#605e5c" text-anchor="end" textLength="12.07" lengthAdjust="spacingAndGlyphs" transform="translate(649.50,498.90) rotate(-35)">Oct</text>
<text font-size="9" fill="#605e5c" text-anchor="end" textLength="13.8" lengthAdjust="spacingAndGlyphs" transform="translate(668.75,498.90) rotate(-35)">Nov</text>
<text font-size="9" fill="#605e5c" text-anchor="end" textLength="13.8" lengthAdjust="spacingAndGlyphs" transform="translate(688.00,498.90) rotate(-35)">Dec</text>
<text x="483.7" y="381.1" font-size="9" fill="#605e5c" text-anchor="middle" textLength="23.3" lengthAdjust="spacingAndGlyphs">$26.0K</text>
<text x="498.8" y="404.1" font-size="9" fill="#605e5c" text-anchor="middle" textLength="23.3" lengthAdjust="spacingAndGlyphs">$25.5K</text>
<text x="518" y="483.3" font-size="9" fill="#605e5c" text-anchor="middle" textLength="23.3" lengthAdjust="spacingAndGlyphs">$24.4K</text>
<text x="537.3" y="404.1" font-size="9" fill="#605e5c" text-anchor="middle" textLength="23.3" lengthAdjust="spacingAndGlyphs">$25.5K</text>
<text x="556.4" y="465.2" font-size="9" fill="#605e5c" text-anchor="middle" textLength="23.3" lengthAdjust="spacingAndGlyphs">$24.7K</text>
<text x="575.5" y="377.3" font-size="9" fill="#605e5c" text-anchor="middle" textLength="23.3" lengthAdjust="spacingAndGlyphs">$26.1K</text>
<text x="594.9" y="440.6" font-size="9" fill="#605e5c" text-anchor="middle" textLength="23.3" lengthAdjust="spacingAndGlyphs">$25.2K</text>
<text x="613" y="416.5" font-size="9" fill="#605e5c" text-anchor="middle" textLength="23.3" lengthAdjust="spacingAndGlyphs">$25.6K</text>
<text x="633.2" y="393.7" font-size="9" fill="#605e5c" text-anchor="middle" textLength="23.3" lengthAdjust="spacingAndGlyphs">$25.7K</text>
<text x="652.4" y="340.1" font-size="9" fill="#605e5c" text-anchor="middle" textLength="23.3" lengthAdjust="spacingAndGlyphs">$26.8K</text>
<text x="671.5" y="420.9" font-size="9" fill="#605e5c" text-anchor="middle" textLength="23.3" lengthAdjust="spacingAndGlyphs">$25.6K</text>
<text x="686.4" y="386" font-size="9" fill="#605e5c" text-anchor="middle" textLength="23.3" lengthAdjust="spacingAndGlyphs">$25.9K</text>
<rect x="714.5" y="310.3" width="207.70000000000005" height="211.90000000000003" rx="3.5" fill="#ffffff" stroke="#cbcbcb" stroke-width="1.2"/>
<text x="719.7" y="322.7" font-size="10.1" fill="#333333" stroke="#333333" stroke-width="0.28" textLength="79.7" lengthAdjust="spacingAndGlyphs">Age Distribution</text>
<path d="M799.40,335 V500" stroke="#dcdcdc" stroke-width="0.8" stroke-dasharray="1,2.4"/>
<path d="M866.60,335 V500" stroke="#dcdcdc" stroke-width="0.8" stroke-dasharray="1,2.4"/>
<rect x="799.20" y="343.80" width="46.70" height="19.50" fill="#3257A8"/>
<rect x="845.90" y="343.80" width="47.60" height="19.50" fill="#37A794"/>
<text x="792.7" y="356.1" font-size="9" fill="#605e5c" text-anchor="end" textLength="42.9" lengthAdjust="spacingAndGlyphs">Young Adult</text>
<text x="822.55" y="356.1" font-size="9" fill="#ffffff" text-anchor="middle" textLength="19.7" lengthAdjust="spacingAndGlyphs">$35M</text>
<text x="869.7" y="356.1" font-size="9" fill="#ffffff" text-anchor="middle" textLength="19.7" lengthAdjust="spacingAndGlyphs">$35M</text>
<rect x="799.20" y="369.38" width="44.70" height="19.50" fill="#3257A8"/>
<rect x="843.90" y="369.38" width="41.70" height="19.50" fill="#37A794"/>
<text x="792.7" y="381.68" font-size="9" fill="#605e5c" text-anchor="end" textLength="40.7" lengthAdjust="spacingAndGlyphs">Older Adult</text>
<text x="821.55" y="381.68" font-size="9" fill="#ffffff" text-anchor="middle" textLength="19.7" lengthAdjust="spacingAndGlyphs">$34M</text>
<text x="864.75" y="381.68" font-size="9" fill="#ffffff" text-anchor="middle" textLength="19.7" lengthAdjust="spacingAndGlyphs">$31M</text>
<rect x="799.20" y="394.96" width="39.30" height="19.50" fill="#3257A8"/>
<rect x="838.50" y="394.96" width="42.70" height="19.50" fill="#37A794"/>
<text x="792.7" y="407.26" font-size="9" fill="#605e5c" text-anchor="end" textLength="67.6" lengthAdjust="spacingAndGlyphs">Middle-Aged Adult</text>
<text x="818.85" y="407.26" font-size="9" fill="#ffffff" text-anchor="middle" textLength="19.7" lengthAdjust="spacingAndGlyphs">$30M</text>
<text x="859.85" y="407.26" font-size="9" fill="#ffffff" text-anchor="middle" textLength="19.7" lengthAdjust="spacingAndGlyphs">$31M</text>
<rect x="799.20" y="420.54" width="40.00" height="19.50" fill="#3257A8"/>
<rect x="839.20" y="420.54" width="41.30" height="19.50" fill="#37A794"/>
<text x="792.7" y="432.84" font-size="9" fill="#605e5c" text-anchor="end" textLength="22.1" lengthAdjust="spacingAndGlyphs">Senior</text>
<text x="819.2" y="432.84" font-size="9" fill="#ffffff" text-anchor="middle" textLength="19.7" lengthAdjust="spacingAndGlyphs">$30M</text>
<text x="859.85" y="432.84" font-size="9" fill="#ffffff" text-anchor="middle" textLength="19.7" lengthAdjust="spacingAndGlyphs">$30M</text>
<rect x="799.20" y="446.12" width="13.90" height="19.50" fill="#3257A8"/>
<rect x="813.10" y="446.12" width="13.90" height="19.50" fill="#37A794"/>
<text x="792.7" y="458.42" font-size="9" fill="#605e5c" text-anchor="end" textLength="23.2" lengthAdjust="spacingAndGlyphs">Elderly</text>
<rect x="799.20" y="471.70" width="2.40" height="19.50" fill="#3257A8"/>
<rect x="801.60" y="471.70" width="3.60" height="19.50" fill="#37A794"/>
<text x="792.7" y="484.0" font-size="9" fill="#605e5c" text-anchor="end" textLength="38.7" lengthAdjust="spacingAndGlyphs">Adolescent</text>
<text x="799.4" y="512.6" font-size="9" fill="#605e5c" text-anchor="middle" textLength="14.8" lengthAdjust="spacingAndGlyphs">$0M</text>
<text x="866.7" y="512.6" font-size="9" fill="#605e5c" text-anchor="middle" textLength="19.1" lengthAdjust="spacingAndGlyphs">$50M</text>
<rect x="0.00" y="57.70" width="1024.00" height="0.80" fill="#f0f0f0"/>
<rect x="0.00" y="58.50" width="1024.00" height="0.90" fill="#e2e2e2"/>
<rect x="0.00" y="59.40" width="1024.00" height="0.60" fill="#f1f1f1" opacity="0.7"/>
</svg></body></html>
